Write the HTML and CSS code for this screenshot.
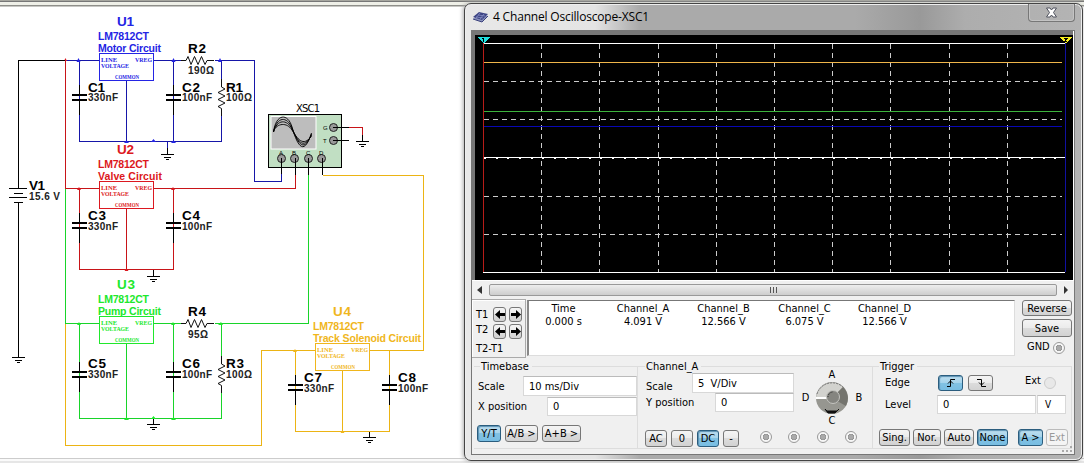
FILE: index.html
```html
<!DOCTYPE html>
<html lang="en">
<head>
<meta charset="utf-8">
<title>4 Channel Oscilloscope-XSC1</title>
<link rel="stylesheet" href="styles.css">
</head>
<body>
<div class="toolbar-edge"></div>
<svg class="schematic" width="1084" height="451" viewBox="0 7 1084 451">
  <defs>
    <g id="cap-leads"><path class="ink" d="M.5 -12V-3M.5 3V18"/><path class="plate" d="M-7 -2.5H8M-7 2.5H8"/></g>
    <g id="ground"><path class="ink" d="M-6 .5H7M-3 3.5H4M-1 5.5H2"/></g>
    <path id="res-h" class="zig" d="M0 .5H5L7 -3.5L10 4.5L13.500 -3.500L17 4.500L20.500 -3.500L24 4.500L26 .5H33"/>
    <path id="res-v" class="zig" d="M.5 -8V0L4 2L-3 5.500L4 9L-3 12.500L4 16L-3 19.500L.5 21.500V29"/>
    <g id="regulator">
      <rect class="wire" x=".5" y=".5" width="54" height="27"/>
      <g class="pin-names">
        <text x="2" y="9" textLength="16" lengthAdjust="spacingAndGlyphs">LINE</text>
        <text x="2" y="15" textLength="28" lengthAdjust="spacingAndGlyphs">VOLTAGE</text>
        <text x="36" y="9" textLength="17" lengthAdjust="spacingAndGlyphs">VREG</text>
        <text x="16" y="26" textLength="24" lengthAdjust="spacingAndGlyphs">COMMON</text>
      </g>
    </g>
    <g id="terminal"><circle class="terminal" r="4"/></g>
  </defs>

  <g class="net blue">
    <path class="wire" d="M65 60.500H99M154 60.500H181M215 60.500H254.500V181.500H281.500V172M79.500 60V141.500H221.500V60M126.500 81V141M173.500 60V141M167.500 141V148"/>
    <use href="#regulator" x="99" y="53"/>
    <path class="dot" d="M76.500 62l2-4 2 4zM171.500 62l2-4 2 4zM218 62l2-4 2 4zM124 143l2.500-3 2.500 3zM151 142l2.500-3 2.500 3zM171 143l2.500-3 2.500 3z"/>
    <text class="ref" x="117" y="26" textLength="17">U1</text>
    <text class="part" x="98" y="40" textLength="51">LM7812CT</text>
    <text class="part" x="98" y="52" textLength="63">Motor Circuit</text>
  </g>
  <g class="net red">
    <path class="wire" d="M65.500 60V188.500H99M154 188.500H295.500V174M79.500 188V269.500H173.500V188M126.500 209V270M349 127.500H362.500V135"/>
    <use href="#regulator" x="99" y="181"/>
    <path class="dot" d="M64 61l1.500-3 1.500 3zM77 190l2-3 2 3zM171 190l2-3 2 3zM124.500 271l2-3 2 3z"/>
    <text class="ref" x="117" y="154" textLength="17">U2</text>
    <text class="part" x="98" y="168" textLength="51">LM7812CT</text>
    <text class="part" x="98" y="180" textLength="64">Valve Circuit</text>
  </g>
  <g class="net green">
    <path class="wire" d="M65.500 189V323.500H99M154 323.500H181M215 323.500H308.500V172M79.500 323V418.500H221.500V323M126.500 344V418M173.500 323V418"/>
    <use href="#regulator" x="99" y="316"/>
    <path class="dot" d="M77 325l2-3 2 3zM171 325l2-3 2 3zM218 325l3-3 2 3zM124 420l2.500-3 2.500 3zM151 419l2.500-3 2.500 3zM171 420l2.500-3 2.500 3z"/>
    <text class="ref" x="117" y="289" textLength="18">U3</text>
    <text class="part" x="98" y="303" textLength="51">LM7812CT</text>
    <text class="part" x="98" y="315" textLength="63">Pump Circuit</text>
  </g>
  <g class="net amber">
    <path class="wire" d="M65.500 324V445.500H261.500V350.500H315M370 350.500H423.500V175.500H322.500M295.500 350V431.500H389.500V350M342.500 371V432"/>
    <use href="#regulator" x="315" y="343"/>
    <path class="dot" d="M293 352l2-3 2 3zM340.500 433l2-3 2 3z"/>
    <text class="ref" x="333" y="316" textLength="18">U4</text>
    <text class="part" x="313" y="330" textLength="51">LM7812CT</text>
    <text class="part" x="313" y="342" textLength="108">Track Solenoid Circuit</text>
  </g>

  <path class="ink" d="M65 60.500H18.500V188M18.500 202V357M9 188.500H27M14 193.500H23M9 197.500H27M14 202.500H23M167.500 148V154M153.500 270V276M153.500 419V424M369.500 432V438M362.500 135V141"/>
  <use href="#ground" x="167" y="154"/><use href="#ground" x="153" y="276"/>
  <use href="#ground" x="153" y="424"/><use href="#ground" x="369" y="437"/>
  <use href="#ground" x="18" y="357"/><use href="#ground" x="362" y="141"/>
  <g>
    <use href="#cap-leads" x="79" y="97"/><use href="#cap-leads" x="173" y="97"/>
    <use href="#cap-leads" x="79" y="225"/><use href="#cap-leads" x="173" y="225"/>
    <use href="#cap-leads" x="79" y="374"/><use href="#cap-leads" x="173" y="374"/>
    <use href="#cap-leads" x="295" y="387"/><use href="#cap-leads" x="389" y="387"/>
  </g>
  <path class="gap" d="M221.500 79V116M221.500 356V393"/>
  <use href="#res-h" x="181" y="60"/><use href="#res-h" x="181" y="323"/>
  <use href="#res-v" x="221" y="87"/><use href="#res-v" x="221" y="364"/>

  <g class="labels">
    <text class="ref" x="188" y="53" textLength="18">R2</text><text class="value" x="188" y="74" textLength="26">190Ω</text>
    <text class="ref" x="88" y="91.500" textLength="17">C1</text><text class="value" x="88" y="101" textLength="30">330nF</text>
    <text class="ref" x="182" y="91.500" textLength="18">C2</text><text class="value" x="182" y="101" textLength="30">100nF</text>
    <text class="ref" x="226" y="91.500" textLength="17">R1</text><text class="value" x="226" y="101" textLength="26">100Ω</text>
    <text class="ref" x="29" y="190" textLength="16">V1</text><text class="value" x="29" y="200" textLength="31">15.6 V</text>
    <text class="ref" x="88" y="220" textLength="18">C3</text><text class="value" x="88" y="230" textLength="30">330nF</text>
    <text class="ref" x="182" y="220" textLength="18">C4</text><text class="value" x="182" y="230" textLength="30">100nF</text>
    <text class="ref" x="188" y="316" textLength="18">R4</text><text class="value" x="188" y="338" textLength="20">95Ω</text>
    <text class="ref" x="88" y="368" textLength="18">C5</text><text class="value" x="88" y="378" textLength="30">330nF</text>
    <text class="ref" x="182" y="368" textLength="18">C6</text><text class="value" x="182" y="378" textLength="30">100nF</text>
    <text class="ref" x="226" y="368" textLength="18">R3</text><text class="value" x="226" y="378" textLength="26">100Ω</text>
    <text class="ref" x="304" y="382" textLength="18">C7</text><text class="value" x="304" y="392" textLength="30">330nF</text>
    <text class="ref" x="398" y="382" textLength="18">C8</text><text class="value" x="398" y="392" textLength="30">100nF</text>
  </g>

  <g class="scope-symbol">
    <text class="scope-name" x="296" y="112" textLength="24">XSC1</text>
    <rect class="scope-case" x="268.500" y="114.500" width="73" height="53"/>
    <rect class="scope-screen" x="271" y="116.500" width="45" height="32.500"/>
    <path class="scope-wave" d="M273.500 132C276 113 288 113 292 127S303 160 311.500 133M273.500 132C277 116 287 116 292 128S303 156 311.500 134M273.500 132C277 119 287 119 292 129S303 152 311.500 135M273.500 131C277 123 287 122 292 130S303 148 311.500 136"/>
    <use href="#terminal" x="281.500" y="158.500"/><use href="#terminal" x="294.500" y="158.500"/>
    <use href="#terminal" x="308.500" y="158.500"/><use href="#terminal" x="321.500" y="158.500"/>
    <use href="#terminal" x="333.500" y="127.500"/><use href="#terminal" x="333.500" y="140.500"/>
    <path class="ink" d="M281.500 158V174M295.500 158V175M308.500 158V175M322.500 158V175M333 127.500H349M333 140.500H349"/>
    <g class="scope-pins"><text x="279" y="154.500">A</text><text x="292" y="154.500">B</text><text x="306" y="154.500">C</text><text x="319" y="154.500">D</text><text x="323" y="130">G</text><text x="323" y="143">T</text></g>
  </g>
</svg>
<div class="status-edge"></div>

<section class="window">
  <header class="titlebar">
    <svg class="app-icon" width="18" height="14" viewBox="0 0 18 14"><path d="M1 9L7 4L16 6L10 12Z" fill="#8b93bc"/><path d="M1 7L7 2L16 4L10 10Z" fill="#3e4585"/><path d="M4 7l7 1M6 5l7 1M8 3l-4 5M12 4L8 9" stroke="#8e97cc" stroke-width=".7" fill="none"/><path d="M1 9l9 3 6-6" stroke="#39407c" fill="none"/></svg>
    <h1>4 Channel Oscilloscope-XSC1</h1>
    <div class="close"><svg width="13" height="11" viewBox="0 0 13 11"><path d="M1.500 1H5L6.500 3 8 1H11.500L8.500 5.500 11.500 10H8L6.500 8 5 10H1.500L4.500 5.500Z" fill="#fff" stroke="#50535e"/></svg></div>
  </header>
  <div class="client">
    <div class="display">
      <svg width="598" height="245" viewBox="475 35 598 245">
        <path class="grid-v" d="M541.500 44V272M599.500 44V272M658.500 44V272M716.500 44V272M774.500 44V272M832.500 44V272M890.500 44V272M949.500 44V272M1007.500 44V272"/>
        <path class="grid-h" d="M484 81.500H1062M484 119.500H1062M484 196.500H1062M484 234.500H1062"/>
        <path class="axis" d="M483 43.500H1065M483 272.500H1065M484 157.500H1065"/>
        <path class="ticks" d="M484 158.500H1065"/>
        <path d="M484 62.500H1062" stroke="#efb54a"/><path d="M484 111.500H1062" stroke="#3cb43c"/><path d="M484 126.500H1062" stroke="#0808b4"/>
        <path d="M483.500 43V272" stroke="#b81c18"/><path d="M1065.500 43V272" stroke="#1010a0" stroke-width="1.500"/>
        <path d="M477 37H490L483.500 43.500Z" fill="#20e0e0"/><path d="M1059 37H1072L1065.500 43.500Z" fill="#f8f020"/>
        <path d="M482 38.500H484M483.500 38V42" stroke="#000"/><path d="M1064 38.500H1067L1064.500 41.500H1067" stroke="#000" fill="none"/>
      </svg>
    </div>
    <div class="scrollbar"><svg width="5" height="8"><path d="M5 0V8L0 4Z" fill="#333"/></svg><div class="thumb"><i></i><i></i><i></i></div><svg width="5" height="8"><path d="M0 0V8L4 4Z" fill="#333"/></svg></div>
    <div class="readings">
      <div class="cursors">
        <div class="cursor"><span>T1</span><button class="arrow"><svg width="10" height="9"><path d="M0 4.500L5 0V3H10V6H5V9Z"/></svg></button><button class="arrow"><svg width="10" height="9"><path d="M10 4.500L5 0V3H0V6H5V9Z"/></svg></button></div>
        <div class="cursor second"><span>T2</span><button class="arrow"><svg width="10" height="9"><path d="M0 4.500L5 0V3H10V6H5V9Z"/></svg></button><button class="arrow"><svg width="10" height="9"><path d="M10 4.500L5 0V3H0V6H5V9Z"/></svg></button></div>
        <div class="delta">T2-T1</div>
      </div>
      <div class="values">
        <div>Time<br>0.000 s</div><div>Channel_A<br>4.091 V</div><div>Channel_B<br>12.566 V</div><div>Channel_C<br>6.075 V</div><div>Channel_D<br>12.566 V</div>
      </div>
      <div class="actions">
        <button class="reverse">Reverse</button><button class="save">Save</button>
        <div class="gnd">GND <span class="jack"></span></div>
      </div>
    </div>
    <div class="groups">
      <section class="group timebase">
        <h2>Timebase</h2>
        <div class="row scale"><label>Scale</label><div class="field">10 ms/Div</div></div>
        <div class="row pos"><label>X position</label><div class="field">0</div></div>
        <div class="buttons"><button class="on w24">Y/T</button><button class="w33">A/B &gt;</button><button class="w39">A+B &gt;</button></div>
      </section>
      <section class="group channel">
        <h2>Channel_A</h2>
        <div class="channel-top">
          <div class="channel-fields">
            <div class="row scale"><label>Scale</label><div class="field">5&nbsp; V/Div</div></div>
            <div class="row pos"><label>Y position</label><div class="field">0</div></div>
          </div>
          <div class="selector">
            <span>A</span>
            <div class="selector-mid"><span>D</span>
              <svg width="36" height="34" viewBox="0 0 36 34"><circle cx="18" cy="17" r="16" fill="#969690"/><path d="M2 17A16 16 0 0 1 29 6L18 17Z" fill="#d2d2ce"/><path d="M29 6A16 16 0 0 1 32 25L18 17Z" fill="#74746e"/><path d="M3 13A16 16 0 0 1 30 7" fill="none" stroke="#777" stroke-dasharray="2 1"/><path d="M2 17H13" stroke="#fff" stroke-width="2"/><circle cx="19" cy="16" r="6.500" fill="#858580" stroke="#c4c4c0"/><path d="M14 16A5 5 0 0 1 19 11" fill="none" stroke="#222" stroke-dasharray="1 1"/><path d="M11 28L13 30H23L25 28L21 32H14Z" fill="#111" stroke="#111"/></svg>
            <span>B</span></div>
            <span>C</span>
          </div>
        </div>
        <div class="buttons"><button class="w22">AC</button><button class="w22">0</button><button class="on w22">DC</button><button class="w16">-</button><div class="jacks"><span class="jack"></span><span class="jack"></span><span class="jack"></span><span class="jack"></span></div></div>
      </section>
      <section class="group trigger">
        <h2>Trigger</h2>
        <div class="row edge"><label>Edge</label><button class="on"><svg width="10" height="10"><path d="M1 8.500H4.500V1.500H9M2 5.500L4.500 3 7 5.500"/></svg></button><button><svg width="10" height="10"><path d="M1 1.500H5.500V8.500H10M3 4.500L5.500 7 8 4.500"/></svg></button><span class="ext">Ext</span><span class="radio"></span></div>
        <div class="row level"><label>Level</label><div class="field amount">0</div><div class="field unit">V</div></div>
        <div class="buttons"><button class="w31">Sing.</button><button class="w28">Nor.</button><button class="w30">Auto</button><button class="on w31">None</button><button class="on source">A &gt;</button><button class="off w22">Ext</button></div>
      </section>
    </div>
    <svg class="grip" width="11" height="6"><path d="M8 0h2v2h-2zM4 4h2v2h-2zM8 4h2v2h-2zM0 4h2v2h-2z" fill="#aaa"/></svg>
  </div>
</section>
</body>
</html>
```
FILE: styles.css
```css
* { box-sizing: border-box; }
body { margin: 0; width: 1084px; height: 463px; overflow: hidden; background: #fff; font: 11px/13px "DejaVu Sans Condensed", "DejaVu Sans", sans-serif; font-stretch: condensed; color: #000; }
.toolbar-edge { height: 7px; background: linear-gradient(#a6a69f 0 1px, #777 1px 2px, #eff0e8 2px 5px, #8f8f8a 5px 6px, #c8c8c4 6px); }
.status-edge { height: 5px; border-top: 1px solid #ccc; border-bottom: 2px solid #e6e6e6; background: #fafafa; }

.schematic { display: block; }
.schematic text { font-family: "Liberation Sans", sans-serif; fill: currentColor; }
.blue { color: #2424e4; }
.red { color: #dc1820; }
.green { color: #20e82c; }
.amber { color: #f0b61c; }
.wire, .ink, .plate { fill: none; stroke-width: 1; shape-rendering: crispEdges; }
.wire { stroke: currentColor; }
.blue .wire { stroke: #1616a8; }
.red .wire { stroke: #c81418; }
.green .wire { stroke: #18d42a; }
.amber .wire { stroke: #ecb414; }
.ink { stroke: #000; }
.plate { stroke: #000; stroke-width: 2; }
.gap { stroke: #fff; stroke-width: 3; fill: none; }
.zig { stroke: #111; fill: none; }
.dot { fill: currentColor; }
.schematic .ref { font-size: 13.500px; font-weight: bold; }
.schematic .part { font-size: 10.500px; font-weight: bold; }
.schematic .value { font-size: 10px; font-weight: bold; fill: #222; }
.schematic .pin-names text { font-family: "Liberation Serif", serif; font-weight: bold; font-size: 6.500px; }
.schematic .scope-name { font: 10px "DejaVu Sans", sans-serif; }
.schematic .scope-pins text { font-size: 6px; }
.scope-case { fill: #c1dfc3; stroke: #000; shape-rendering: crispEdges; }
.scope-screen { fill: #bdbdbd; stroke: #fff; }
.scope-wave { fill: none; stroke: #000; stroke-width: .9; }
.terminal { fill: #999; stroke: #222; }

.window { position: absolute; left: 464px; top: 3px; width: 619px; height: 458px; padding: 0 8px 7px 7px; border: 1px solid #444; border-radius: 7px; background: linear-gradient(90deg, #e8e8e8 0, #e4e4e4 130px, #cacaca 150px, #aaa 175px, #aaa 390px, #999 455px, #adadad 500px, #b4b4b4); box-shadow: inset 0 0 0 1px #eee, -1px 0 4px #aaa; }
.titlebar { height: 27px; display: flex; align-items: flex-start; }
.app-icon { margin: 6px 3px 0 0; }
.titlebar h1 { margin: 4px 0 0; font: 12px/18px "Open Sans", sans-serif; letter-spacing: -.18px; white-space: nowrap; flex: 1; }
.close { width: 47px; height: 18px; margin-right: -1px; border: 1px solid #777; border-top: 0; border-radius: 0 0 4px 4px; display: flex; justify-content: center; align-items: center; box-shadow: inset 0 0 0 1px #c4c4c4; }
.client { position: relative; height: 423px; background: #f0f0f0; outline: 1px solid #777; }
.display { height: 250px; padding: 4px 2px 0 3px; background: #777; border-right: 1px solid #fff; border-bottom: 1px solid #fff; }
.display svg { display: block; background: #000; shape-rendering: crispEdges; }
.grid-v, .grid-h { stroke: #ccc; stroke-dasharray: 5 4; }
.axis { stroke: #fff; }
.ticks { stroke: #fff; stroke-dasharray: 2 9.640; }
.scrollbar { display: flex; align-items: center; height: 18px; padding: 0 5px 0 5px; gap: 7px; }
.thumb { flex: 1; height: 12px; border: 1px solid #999; border-radius: 2px; background: linear-gradient(#eee, #ddd 50%, #cdcdcd); display: flex; align-items: center; justify-content: center; gap: 2px; }
.thumb i { width: 1px; height: 6px; background: #555; }

button { display: flex; align-items: center; justify-content: center; flex: none; padding: 0; margin: 0; height: 17px; font: inherit; color: #000; border: 1px solid #777; border-radius: 3px; background: linear-gradient(#f4f4f4, #ebebeb 50%, #dcdcdc 50%, #d2d2d2); white-space: nowrap; }
button.on { border-color: #2b5d7e; background: linear-gradient(#bedeef, #a4d3eb 50%, #82c2e3 50%, #78bde2); box-shadow: inset 1px 1px 1px #5b91b2; }
button.off { color: #999; border-color: #bbb; background: #f4f4f4; }
.readings { display: flex; height: 61px; }
.cursors { width: 54px; height: 59px; border: 1px solid #aaa; border-left: 0; box-shadow: inset 1px 1px #fff; padding: 6px 0 0 4px; }
.cursor { display: flex; height: 17px; align-items: center; }
.cursor span { width: 19px; }
.cursor.second span { margin-top: -5px; }
.arrow { width: 13px; height: 15px; margin-right: 3px; }
.delta { margin-top: 2px; }
.values { width: 488px; height: 56px; margin: 1px 0 0 1px; border: 1px solid #ddd; border-top-color: #777; border-left: 2px solid #888; background: #fff; padding-top: 1px; display: grid; grid-template-columns: 69px 90px 71px 91px 69px; justify-content: start; text-align: center; white-space: nowrap; }
.actions { width: 50px; margin: 1px 0 0 7px; }
.actions button { width: 50px; }
.reverse { height: 16px; }
.save { height: 18px; margin-top: 3px; }
.gnd { display: flex; align-items: center; gap: 3px; padding-left: 5px; margin-top: 3px; }
.jack { display: block; flex: none; width: 12px; height: 12px; border: 1px solid #999; border-radius: 50%; background: radial-gradient(circle, #aaa 0 2px, #909090 3px, #f6f6f6 3.500px); }
.gnd .jack { position: relative; top: 1px; }

.groups { display: flex; height: 94px; padding: 6px 2px 0; }
.group { height: 83px; border: solid #ddd; border-width: 1px 1px 1px 0; }
.group h2 { width: max-content; margin: -7px 0 0 6px; padding: 0 3px 0 1px; font: inherit; background: #f0f0f0; }
.row { display: flex; align-items: center; }
.row label { flex: none; }
.field { flex: none; background: #fff; border: 1px solid #d8d8d8; border-top-color: #bbb; display: flex; align-items: center; padding-left: 5px; }
.buttons { display: flex; }
.timebase { width: 164px; }
.timebase .row { padding-left: 4px; height: 20px; }
.timebase .scale { margin-top: 3px; }
.timebase .scale label { width: 45px; }
.timebase .scale .field { width: 114px; height: 20px; }
.timebase .pos label { width: 69px; }
.timebase .pos .field { width: 90px; height: 19px; }
.timebase .buttons { gap: 4px; margin: 9px 0 0 3px; }
.channel { width: 235px; }
.channel .group h2, .channel h2 { margin-left: 7px; }
.channel-top { display: flex; height: 57px; }
.channel-fields { width: 156px; }
.channel .row { padding-left: 8px; }
.channel .scale label { width: 46px; padding-top: 6px; }
.channel .scale .field { width: 102px; height: 20px; }
.channel .pos label { width: 69px; }
.channel .pos .field { width: 79px; height: 19px; }
.selector { width: 60px; margin-left: 8px; display: flex; flex-direction: column; align-items: center; line-height: 12px; margin-top: -4px; }
.selector-mid { display: flex; align-items: center; gap: 5px; }
.channel .buttons { gap: 4px; padding-left: 7px; }
.jacks { display: flex; gap: 16.400px; margin: 1px 0 0 17px; }
.trigger { width: 199px; }
.trigger .row { padding-left: 12px; }
.trigger .edge { height: 17px; margin-top: 1px; }
.edge label { width: 53px; }
.edge button { width: 25px; height: 16px; margin-right: 5px; }
.edge svg path { fill: none; stroke: #000; }
.edge .ext { margin-left: 27px; margin-top: -4px; }
.radio { width: 12px; height: 12px; margin-left: 3px; border: 1px solid #ccc; border-radius: 50%; background: #e8e8e8; }
.level { margin-top: 4px; }
.level label { width: 52px; }
.level .field { height: 19px; }
.level .amount { width: 99px; }
.level .unit { width: 29px; margin-left: 1px; padding-left: 7px; font-size: 10px; }
.trigger .buttons { gap: 3px; margin: 15px 0 0 6px; }
.source { width: 25px; margin-left: 7px; }
.w16 { width: 16px; } .w22 { width: 22px; } .w24 { width: 24px; } .w28 { width: 28px; } .w30 { width: 30px; }
.w31 { width: 31px; } .w33 { width: 33px; } .w39 { width: 39px; }
.grip { position: absolute; right: 1px; bottom: 2px; }
```
